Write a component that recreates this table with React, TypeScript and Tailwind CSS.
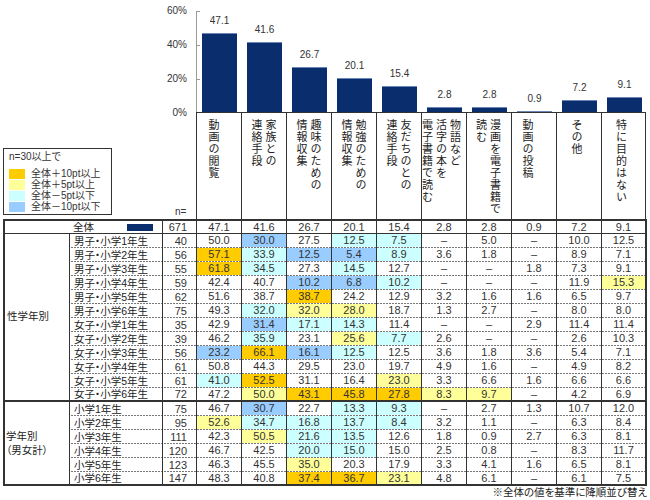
import React from 'react';

type Col = { lines: string[]; shift: string };

const cols: Col[] = [
  { lines: ['動画の閲覧'], shift: 'pr-[10px]' },
  { lines: ['家族との', '連絡手段'], shift: '' },
  { lines: ['趣味のための', '情報収集'], shift: '' },
  { lines: ['勉強のための', '情報収集'], shift: '' },
  { lines: ['友だちのとの', '連絡手段'], shift: '' },
  { lines: ['物語など', '活字の本を', '電子書籍で読む'], shift: 'pr-[5px]' },
  { lines: ['漫画を電子書籍で', '読む'], shift: 'pr-[1px]' },
  { lines: ['動画の投稿'], shift: 'pr-[12px]' },
  { lines: ['その他'], shift: 'pr-[4px]' },
  { lines: ['特に目的はない'], shift: 'pr-[4px]' },
];

const totals = ['47.1', '41.6', '26.7', '20.1', '15.4', '2.8', '2.8', '0.9', '7.2', '9.1'];

type Row = [string, string, string[]];

const group1: Row[] = [
  ['男子・小学1年生', '40', ['50.0', '30.0:b', '27.5', '12.5:c', '7.5:c', '–', '5.0', '–', '10.0', '12.5']],
  ['男子・小学2年生', '56', ['57.1:g', '33.9:c', '12.5:b', '5.4:b', '8.9:c', '3.6', '1.8', '–', '8.9', '7.1']],
  ['男子・小学3年生', '55', ['61.8:g', '34.5:c', '27.3', '14.5:c', '12.7', '–', '–', '1.8', '7.3', '9.1']],
  ['男子・小学4年生', '59', ['42.4', '40.7', '10.2:b', '6.8:b', '10.2:c', '–', '–', '–', '11.9', '15.3:y']],
  ['男子・小学5年生', '62', ['51.6', '38.7', '38.7:g', '24.2', '12.9', '3.2', '1.6', '1.6', '6.5', '9.7']],
  ['男子・小学6年生', '75', ['49.3', '32.0:c', '32.0:y', '28.0:y', '18.7', '1.3', '2.7', '–', '8.0', '8.0']],
  ['女子・小学1年生', '35', ['42.9', '31.4:b', '17.1:c', '14.3:c', '11.4', '–', '–', '2.9', '11.4', '11.4']],
  ['女子・小学2年生', '39', ['46.2', '35.9:c', '23.1', '25.6:y', '7.7:c', '2.6', '–', '–', '2.6', '10.3']],
  ['女子・小学3年生', '56', ['23.2:b', '66.1:g', '16.1:b', '12.5:c', '12.5', '3.6', '1.8', '3.6', '5.4', '7.1']],
  ['女子・小学4年生', '61', ['50.8', '44.3', '29.5', '23.0', '19.7', '4.9', '1.6', '–', '4.9', '8.2']],
  ['女子・小学5年生', '61', ['41.0:c', '52.5:g', '31.1', '16.4', '23.0:y', '3.3', '6.6', '1.6', '6.6', '6.6']],
  ['女子・小学6年生', '72', ['47.2', '50.0:y', '43.1:g', '45.8:g', '27.8:g', '8.3:y', '9.7:y', '–', '4.2', '6.9']],
];

const group2: Row[] = [
  ['小学1年生', '75', ['46.7', '30.7:b', '22.7', '13.3:c', '9.3:c', '–', '2.7', '1.3', '10.7', '12.0']],
  ['小学2年生', '95', ['52.6:y', '34.7:c', '16.8:c', '13.7:c', '8.4:c', '3.2', '1.1', '–', '6.3', '8.4']],
  ['小学3年生', '111', ['42.3', '50.5:y', '21.6:c', '13.5:c', '12.6', '1.8', '0.9', '2.7', '6.3', '8.1']],
  ['小学4年生', '120', ['46.7', '42.5', '20.0:c', '15.0:c', '15.0', '2.5', '0.8', '–', '8.3', '11.7']],
  ['小学5年生', '123', ['46.3', '45.5', '35.0:y', '20.3', '17.9', '3.3', '4.1', '1.6', '6.5', '8.1']],
  ['小学6年生', '147', ['48.3', '40.8', '37.4:g', '36.7:g', '23.1:y', '4.8', '6.1', '–', '6.1', '7.5']],
];

const colorMap: Record<string, string> = {
  g: 'bg-[#ffcc00]',
  y: 'bg-[#ffff99]',
  c: 'bg-[#ccffff]',
  b: 'bg-[#99ccff]',
};

const DASH =
  'bg-[linear-gradient(to_right,#777_2px,transparent_2px)] bg-[length:3px_1px] bg-bottom bg-repeat-x';

function DataRow({ row, last }: { row: Row; last: boolean }) {
  const [label, n, vals] = row;
  return (
    <div className={`flex ${last ? 'h-[12px]' : 'h-[14px] ' + DASH}`}>
      <div className="w-[93px] border-r border-[#333] flex items-center pl-[4px] text-[10.5px] leading-none whitespace-nowrap text-[#222]">
        {label}
      </div>
      <div className="w-[34px] border-r border-[#333] flex items-center justify-end pr-[9px] text-[11px] leading-none">
        {n}
      </div>
      {vals.map((v, i) => {
        const [val, c] = v.split(':');
        const isLast = i === vals.length - 1;
        return (
          <div
            key={i}
            className={`${isLast ? 'w-[43px]' : 'w-[45px] border-r border-[#333]'} flex flex-col`}
          >
            <div
              className={`flex-1 ${last ? '' : 'mb-px'} flex items-center justify-center text-[11px] leading-none ${
                c ? colorMap[c] : ''
              }`}
            >
              {val}
            </div>
          </div>
        );
      })}
    </div>
  );
}

export default function App() {
  const scale = 101 / 60;
  return (
    <div className="w-[650px] h-[500px] bg-white text-[#333] font-['Liberation_Sans','Noto_Sans_CJK_JP',sans-serif] [font-feature-settings:'palt'] overflow-hidden">
      {/* top section */}
      <div className="flex h-[219px]">
        <div className="w-[196px] flex flex-col">
          <div className="h-[112px] flex flex-col items-end pr-[9px] pt-[4px] gap-[20px] text-[10px] leading-[14px] text-[#333]">
            <span>60%</span>
            <span>40%</span>
            <span>20%</span>
            <span>0%</span>
          </div>
          <div className="mt-[36px] flex items-end">
            <div className="ml-[3px] w-[109px] h-[67px] border border-[#333] pl-[5px] pt-px text-[10px] text-[#333]">
              <div className="leading-[14px]">n=30以上で</div>
              <div className="mt-[4px] flex flex-col">
                {[
                  ['bg-[#ffcc00]', '全体＋10pt以上'],
                  ['bg-[#ffff99]', '全体＋5pt以上'],
                  ['bg-[#ccffff]', '全体－5pt以下'],
                  ['bg-[#99ccff]', '全体－10pt以下'],
                ].map(([c, t]) => (
                  <div key={t} className="h-[11px] flex items-center">
                    <div className={`w-[16px] h-[10px] ${c}`} />
                    <span className="ml-[6px] leading-[11px] whitespace-nowrap">{t}</span>
                  </div>
                ))}
              </div>
            </div>
            <span className="ml-[63px] mb-[-3px] text-[10px] leading-[12px]">n=</span>
          </div>
        </div>
        <div className="w-[450px] flex flex-col">
          <div className="h-[112px] relative flex">
            <div className="absolute left-0 top-[11px] bottom-0 w-px bg-[#999]" />
            <div className="absolute left-0 top-[11px] w-[4px] h-px bg-[#999]" />
            <div className="absolute left-0 top-[45px] w-[4px] h-px bg-[#999]" />
            <div className="absolute left-0 top-[79px] w-[4px] h-px bg-[#999]" />
            {totals.map((v, i) => (
              <div key={i} className="w-[45px] flex flex-col justify-end items-center pl-[2px]">
                <span className="text-[10px] leading-[14px] mb-[5px] text-[#333]">{v}</span>
                <div
                  className="w-[35px] bg-[#0a2d6d] border-t border-[#6a86b6]"
                  style={{ height: `${parseFloat(v) * scale}px` }}
                />
              </div>
            ))}
          </div>
          <div className="h-[107px] flex border-t border-[#333]">
            {cols.map((c, i) => (
              <div
                key={i}
                className={`w-[45px] border-l border-[#333] ${
                  i === cols.length - 1 ? 'border-r' : ''
                } flex justify-center pt-[6px] ${c.shift}`}
              >
                <div className="[writing-mode:vertical-rl] [font-feature-settings:normal] font-['Noto_Sans_CJK_JP',sans-serif] text-[11px] leading-[14px] tracking-[1px] text-[#222] whitespace-nowrap">
                  {c.lines.map((l, j) => (
                    <React.Fragment key={j}>
                      {j > 0 && <br />}
                      {l}
                    </React.Fragment>
                  ))}
                </div>
              </div>
            ))}
          </div>
        </div>
      </div>

      {/* table */}
      <div className="ml-[3px] w-[644px] border-2 border-[#333]">
        <div className="flex h-[13px] border-b border-[#333]">
          <div className="w-[158px] border-r border-[#333] flex items-center">
            <span className="ml-[68px] text-[10.5px] leading-none text-[#222]">全体</span>
            <div className="ml-[33px] w-[26px] h-[7px] bg-[#0a2d6d]" />
          </div>
          <div className="w-[34px] border-r border-[#333] flex items-center justify-end pr-[9px] text-[11px] leading-none">
            671
          </div>
          {totals.map((v, i) => (
            <div
              key={i}
              className={`${
                i === totals.length - 1 ? 'w-[43px]' : 'w-[45px] border-r border-[#333]'
              } flex items-center justify-center text-[11px] leading-none`}
            >
              {v}
            </div>
          ))}
        </div>

        <div className="flex border-b-2 border-[#333]">
          <div className="w-[65px] border-r border-[#333] flex items-center pl-[2px] text-[10.5px] text-[#222]">
            性学年別
          </div>
          <div className="flex flex-col">
            {group1.map((r, i) => (
              <DataRow key={i} row={r} last={i === group1.length - 1} />
            ))}
          </div>
        </div>

        <div className="flex">
          <div className="w-[65px] border-r border-[#333] flex flex-col justify-center pl-[1px] text-[10.5px] leading-[14px] text-[#222]">
            <span>学年別</span>
            <span>（男女計）</span>
          </div>
          <div className="flex flex-col">
            {group2.map((r, i) => (
              <DataRow key={i} row={r} last={i === group2.length - 1} />
            ))}
          </div>
        </div>
      </div>

      <div className="ml-[3px] w-[644px] text-right text-[10.5px] leading-[12px] text-[#222]">
        ※全体の値を基準に降順並び替え
      </div>
    </div>
  );
}
